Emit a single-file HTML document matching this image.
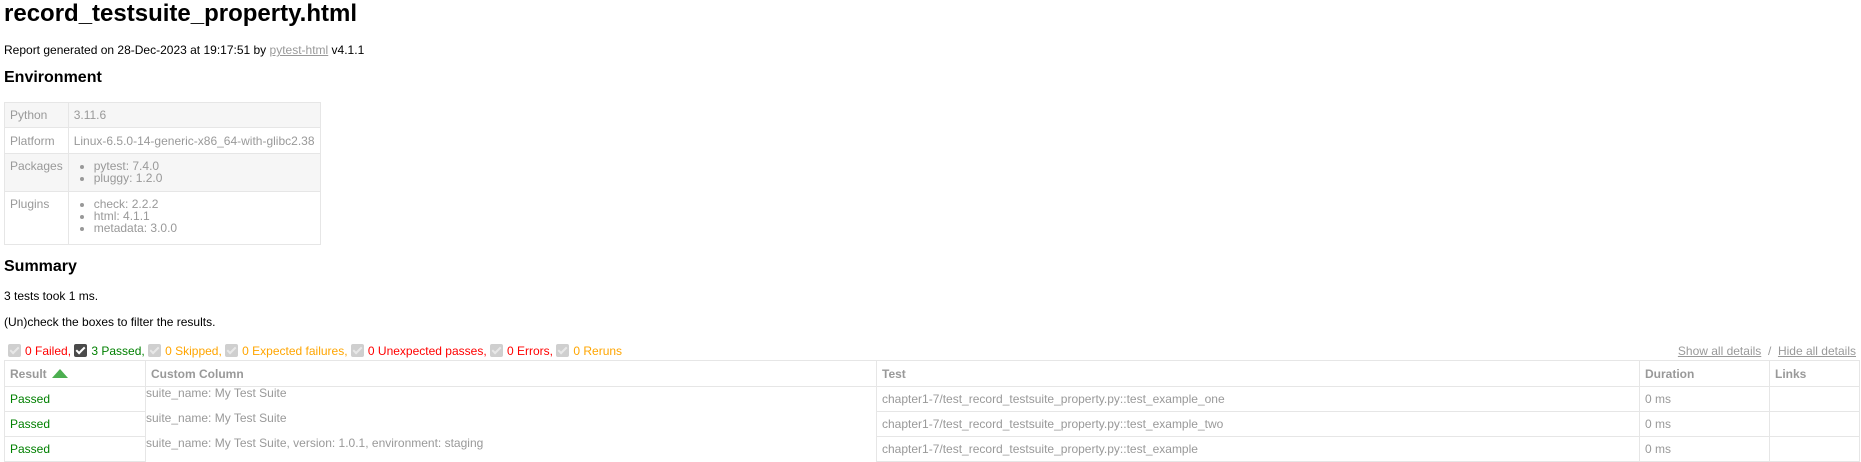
<!DOCTYPE html>
<html><head><meta charset="utf-8"><style>
html,body{margin:0;padding:0;background:#fff}
body{font-family:"Liberation Sans",Arial,sans-serif;font-size:12px;color:#000;width:1861px;height:460px;overflow:hidden;position:relative}
.a{position:absolute;white-space:nowrap}
h1{font-size:24px;font-weight:bold;margin:0}
h2{font-size:16px;font-weight:bold;margin:0}
a{color:#999;text-decoration:underline}
table{border-collapse:collapse;position:absolute}
#env{left:4px;top:102px;width:317px;color:#999}
#env td{border:1px solid #e6e6e6;padding:0 5px;vertical-align:top;line-height:12px}
#env tr.s td{background:#f6f6f6}
#env ul{margin:0;padding-left:20px}
#env li{line-height:12px}
.cb{display:inline-block;width:13px;height:13px;background:#cfcfcf;border-radius:2px;vertical-align:-2px;margin-right:4px;position:relative}
.cb.on{background:#4a4a4a}
.cb:after{content:"";position:absolute;left:4px;top:1px;width:3px;height:7px;border:solid #fff;border-width:0 2px 2px 0;transform:rotate(45deg)}
.cb.off:after{border-color:#e8e8e8}
#res{left:4px;top:360px;width:1855px;color:#999;table-layout:fixed}
#res th,#res td{border:1px solid #e6e6e6;padding:0 5px;text-align:left;height:24px}
#res th{font-weight:bold;height:25px}
#res td.c{border-top:none;border-bottom:none;vertical-align:top;padding:0;line-height:12px}
.p{color:#008000}
.tri{display:inline-block;width:0;height:0;border-left:8px solid transparent;border-right:8px solid transparent;border-bottom:9px solid #4caf50;vertical-align:0px;margin-left:5px}
</style></head><body>
<h1 class="a" style="left:4px;top:0px;line-height:28px">record_testsuite_property.html</h1>
<div class="a" style="left:4px;top:43px;line-height:14px">Report generated on 28-Dec-2023 at 19:17:51 by <a>pytest-html</a> v4.1.1</div>
<h2 class="a" style="left:4px;top:68px;line-height:20px">Environment</h2>
<table id="env">
<tr class="s" style="height:25px"><td style="width:52px;vertical-align:middle">Python</td><td style="vertical-align:middle">3.11.6</td></tr>
<tr style="height:26px"><td style="vertical-align:middle">Platform</td><td style="vertical-align:middle">Linux-6.5.0-14-generic-x86_64-with-glibc2.38</td></tr>
<tr class="s" style="height:38px"><td style="padding-top:6px">Packages</td><td style="padding-top:6px"><ul><li>pytest: 7.4.0</li><li>pluggy: 1.2.0</li></ul></td></tr>
<tr style="height:53px"><td style="padding-top:6px">Plugins</td><td style="padding-top:6px"><ul><li>check: 2.2.2</li><li>html: 4.1.1</li><li>metadata: 3.0.0</li></ul></td></tr>
</table>
<h2 class="a" style="left:4px;top:257px;line-height:20px">Summary</h2>
<div class="a" style="left:4px;top:289px;line-height:14px">3 tests took 1 ms.</div>
<div class="a" style="left:4px;top:315px;line-height:14px">(Un)check the boxes to filter the results.</div>
<div class="a" style="left:8px;top:344px;line-height:14px"><span class="cb off"></span><span style="color:#f00">0 Failed,</span> <span class="cb on"></span><span style="color:#008000">3 Passed,</span> <span class="cb off"></span><span style="color:#ffa500">0 Skipped,</span> <span class="cb off"></span><span style="color:#ffa500">0 Expected failures,</span> <span class="cb off"></span><span style="color:#f00">0 Unexpected passes,</span> <span class="cb off"></span><span style="color:#f00">0 Errors,</span> <span class="cb off"></span><span style="color:#ffa500">0 Reruns</span></div>
<div class="a" style="right:5px;top:344px;line-height:14px;color:#999"><a>Show all details</a> &nbsp;/&nbsp; <a>Hide all details</a></div>
<table id="res">
<colgroup><col style="width:141px"><col style="width:731px"><col style="width:763px"><col style="width:130px"><col style="width:90px"></colgroup>
<tr><th>Result<span class="tri"></span></th><th>Custom Column</th><th>Test</th><th>Duration</th><th>Links</th></tr>
<tr><td class="p">Passed</td><td class="c">suite_name: My Test Suite</td><td>chapter1-7/test_record_testsuite_property.py::test_example_one</td><td>0 ms</td><td></td></tr>
<tr><td class="p">Passed</td><td class="c">suite_name: My Test Suite</td><td>chapter1-7/test_record_testsuite_property.py::test_example_two</td><td>0 ms</td><td></td></tr>
<tr><td class="p">Passed</td><td class="c">suite_name: My Test Suite, version: 1.0.1, environment: staging</td><td>chapter1-7/test_record_testsuite_property.py::test_example</td><td>0 ms</td><td></td></tr>
</table>
</body></html>
